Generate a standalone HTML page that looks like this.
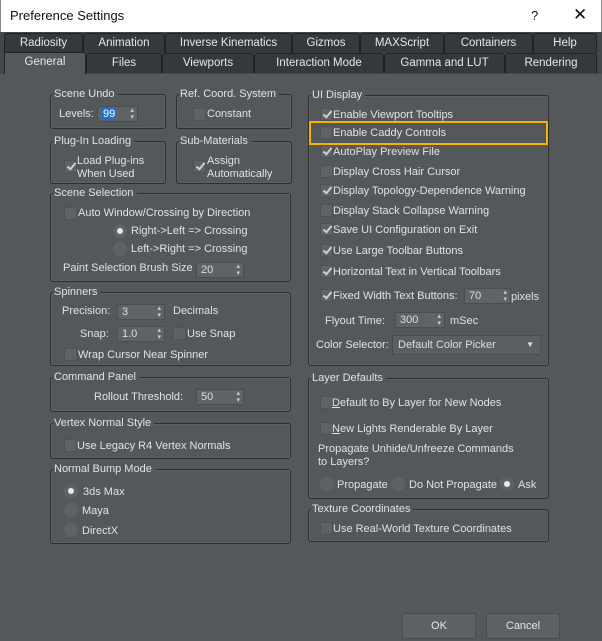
<!DOCTYPE html>
<html><head><meta charset="utf-8"><style>
*{box-sizing:border-box;margin:0;padding:0}
body{width:602px;height:641px;background:#55585b;font-family:"Liberation Sans",sans-serif;font-size:11px;color:#e2e2e2;position:relative;overflow:hidden}
.a{position:absolute;white-space:nowrap}
.title{left:0;top:0;width:602px;height:32px;background:#fff;color:#111;font-size:13px;border-left:1px solid #888;border-right:1px solid #888}
.tabbar{left:0;top:32px;width:602px;height:42px;background:#44474a}
.tab{position:absolute;height:20px;background:#36393c;border:1px solid #222;border-bottom:none;border-radius:3px 3px 0 0;text-align:center;line-height:19px;color:#e6e6e6;font-size:11.5px}
.tab.sel{background:#55585b;height:22px}
.g{position:absolute;border:1px solid #2c2f32;border-radius:3px;box-shadow:inset 0 0 0 1px #5e6164}
.lg{position:absolute;top:-8px;left:2px;background:#55585b;padding:0 3px 0 1px;line-height:14px}
.cb{position:absolute;width:13px;height:13px;background:#5f6265;border:1px solid #505356}
.cb.c::after{content:"";box-sizing:content-box;position:absolute;left:4px;top:0px;width:3px;height:7px;border-right:2px solid #cfcfcf;border-bottom:2px solid #cfcfcf;transform:rotate(40deg)}
.rb{position:absolute;width:14px;height:14px;border-radius:50%;background:#5f6265}
.rb.c::after{content:"";position:absolute;left:4px;top:4px;width:6px;height:6px;border-radius:50%;background:#e8e8e8}
.sp{position:absolute;height:16px;background:#606366;border:1px solid #4b4e51;padding-left:4px;line-height:14px;color:#ddd}
.sp::after{content:"▴\A▾";white-space:pre;position:absolute;right:3px;top:0;font-size:7px;line-height:7px;color:#ccc}
.btn{position:absolute;height:26px;background:#5e6164;border:1px solid #4a4d50;border-radius:2px;text-align:center;line-height:24px;color:#e6e6e6}
</style></head><body>
<div class="a title"><span class="a" style="left:9px;top:8px">Preference Settings</span><span class="a" style="left:530px;top:8px">?</span><span class="a" style="left:572px;top:5px;font-size:17px">✕</span></div>
<div class="a tabbar"></div>
<div class="tab" style="left:4px;top:33px;width:79px">Radiosity</div>
<div class="tab" style="left:83px;top:33px;width:82px">Animation</div>
<div class="tab" style="left:165px;top:33px;width:127px">Inverse Kinematics</div>
<div class="tab" style="left:292px;top:33px;width:68px">Gizmos</div>
<div class="tab" style="left:360px;top:33px;width:84px">MAXScript</div>
<div class="tab" style="left:444px;top:33px;width:89px">Containers</div>
<div class="tab" style="left:533px;top:33px;width:64px">Help</div>
<div class="tab sel" style="left:4px;top:52px;width:82px">General</div>
<div class="tab" style="left:86px;top:53px;width:76px">Files</div>
<div class="tab" style="left:162px;top:53px;width:92px">Viewports</div>
<div class="tab" style="left:254px;top:53px;width:130px">Interaction Mode</div>
<div class="tab" style="left:384px;top:53px;width:121px">Gamma and LUT</div>
<div class="tab" style="left:505px;top:53px;width:92px">Rendering</div>

<div class="g" style="left:50px;top:94px;width:116px;height:35px"><span class="lg">Scene Undo</span></div>
<span class="a" style="left:59px;top:108px">Levels:</span>
<div class="sp" style="left:97px;top:106px;width:41px"><span style="background:#1f6fd0;color:#fff;padding:0 1px">99</span></div>
<div class="g" style="left:176px;top:94px;width:116px;height:35px"><span class="lg">Ref. Coord. System</span></div>
<div class="cb" style="left:193px;top:108px"></div><span class="a" style="left:207px;top:108px">Constant</span>

<div class="g" style="left:50px;top:141px;width:116px;height:43px"><span class="lg">Plug-In Loading</span></div>
<div class="cb c" style="left:64px;top:160px"></div><span class="a" style="left:77px;top:155px;line-height:13px">Load Plug-ins<br>When Used</span>
<div class="g" style="left:176px;top:141px;width:116px;height:43px"><span class="lg">Sub-Materials</span></div>
<div class="cb c" style="left:193px;top:160px"></div><span class="a" style="left:207px;top:155px;line-height:13px">Assign<br>Automatically</span>

<div class="g" style="left:50px;top:193px;width:241px;height:89px"><span class="lg">Scene Selection</span></div>
<div class="cb" style="left:64px;top:207px"></div><span class="a" style="left:78px;top:207px">Auto Window/Crossing by Direction</span>
<div class="rb c" style="left:113px;top:224px"></div><span class="a" style="left:131px;top:225px">Right-&gt;Left =&gt; Crossing</span>
<div class="rb" style="left:113px;top:242px"></div><span class="a" style="left:131px;top:243px">Left-&gt;Right =&gt; Crossing</span>
<span class="a" style="left:63px;top:262px">Paint Selection Brush Size</span>
<div class="sp" style="left:196px;top:262px;width:48px">20</div>

<div class="g" style="left:50px;top:292px;width:241px;height:74px"><span class="lg">Spinners</span></div>
<span class="a" style="left:62px;top:305px">Precision:</span><div class="sp" style="left:117px;top:304px;width:48px">3</div><span class="a" style="left:173px;top:305px">Decimals</span>
<span class="a" style="left:80px;top:328px">Snap:</span><div class="sp" style="left:117px;top:326px;width:48px">1.0</div>
<div class="cb" style="left:173px;top:327px"></div><span class="a" style="left:187px;top:328px">Use Snap</span>
<div class="cb" style="left:64px;top:348px"></div><span class="a" style="left:78px;top:349px">Wrap Cursor Near Spinner</span>

<div class="g" style="left:50px;top:377px;width:241px;height:35px"><span class="lg">Command Panel</span></div>
<span class="a" style="left:94px;top:391px">Rollout Threshold:</span><div class="sp" style="left:196px;top:389px;width:48px">50</div>

<div class="g" style="left:50px;top:423px;width:241px;height:36px"><span class="lg">Vertex Normal Style</span></div>
<div class="cb" style="left:64px;top:439px"></div><span class="a" style="left:77px;top:440px">Use Legacy R4 Vertex Normals</span>

<div class="g" style="left:50px;top:469px;width:241px;height:75px"><span class="lg">Normal Bump Mode</span></div>
<div class="rb c" style="left:64px;top:484px"></div><span class="a" style="left:83px;top:486px">3ds Max</span>
<div class="rb" style="left:64px;top:503px"></div><span class="a" style="left:82px;top:505px">Maya</span>
<div class="rb" style="left:64px;top:523px"></div><span class="a" style="left:82px;top:525px">DirectX</span>

<div class="g" style="left:308px;top:95px;width:241px;height:271px"><span class="lg">UI Display</span></div>
<div class="cb c" style="left:320px;top:108px"></div><span class="a" style="left:333px;top:109px">Enable Viewport Tooltips</span>
<div class="a" style="left:309px;top:121px;width:239px;height:24px;border:2px solid #f5b300"></div>
<div class="cb" style="left:320px;top:126px"></div><span class="a" style="left:333px;top:127px">Enable Caddy Controls</span>
<div class="cb c" style="left:320px;top:145px"></div><span class="a" style="left:333px;top:146px">AutoPlay Preview File</span>
<div class="cb" style="left:320px;top:165px"></div><span class="a" style="left:333px;top:166px">Display Cross Hair Cursor</span>
<div class="cb c" style="left:320px;top:184px"></div><span class="a" style="left:333px;top:185px">Display Topology-Dependence Warning</span>
<div class="cb" style="left:320px;top:204px"></div><span class="a" style="left:333px;top:205px">Display Stack Collapse Warning</span>
<div class="cb c" style="left:320px;top:223px"></div><span class="a" style="left:333px;top:224px">Save UI Configuration on Exit</span>
<div class="cb c" style="left:320px;top:244px"></div><span class="a" style="left:333px;top:245px">Use Large Toolbar Buttons</span>
<div class="cb c" style="left:320px;top:265px"></div><span class="a" style="left:333px;top:266px">Horizontal Text in Vertical Toolbars</span>
<div class="cb c" style="left:320px;top:289px"></div><span class="a" style="left:333px;top:290px">Fixed Width Text Buttons:</span>
<div class="sp" style="left:464px;top:288px;width:47px">70</div><span class="a" style="left:511px;top:291px">pixels</span>
<span class="a" style="left:325px;top:315px">Flyout Time:</span><div class="sp" style="left:395px;top:312px;width:50px">300</div><span class="a" style="left:450px;top:315px">mSec</span>
<span class="a" style="left:316px;top:339px">Color Selector:</span>
<div class="a" style="left:392px;top:335px;width:149px;height:20px;background:#5c5f62;border:1px solid #4a4d50;padding:3px 5px;color:#ddd">Default Color Picker<span class="a" style="right:6px;top:4px;font-size:8px">▼</span></div>

<div class="g" style="left:308px;top:378px;width:241px;height:121px"><span class="lg">Layer Defaults</span></div>
<div class="cb" style="left:320px;top:396px"></div><span class="a" style="left:332px;top:397px"><u>D</u>efault to By Layer for New Nodes</span>
<div class="cb" style="left:320px;top:422px"></div><span class="a" style="left:332px;top:423px"><u>N</u>ew Lights Renderable By Layer</span>
<span class="a" style="left:318px;top:443px;line-height:13px">Propagate Unhide/Unfreeze Commands<br>to Layers?</span>
<div class="rb" style="left:320px;top:477px"></div><span class="a" style="left:337px;top:479px">Propagate</span>
<div class="rb" style="left:391px;top:477px"></div><span class="a" style="left:409px;top:479px">Do Not Propagate</span>
<div class="rb c" style="left:500px;top:477px"></div><span class="a" style="left:518px;top:479px">Ask</span>

<div class="g" style="left:308px;top:509px;width:241px;height:33px"><span class="lg">Texture Coordinates</span></div>
<div class="cb" style="left:320px;top:522px"></div><span class="a" style="left:333px;top:523px">Use Real-World Texture Coordinates</span>

<div class="btn" style="left:402px;top:613px;width:74px">OK</div>
<div class="btn" style="left:486px;top:613px;width:74px">Cancel</div>
</body></html>
